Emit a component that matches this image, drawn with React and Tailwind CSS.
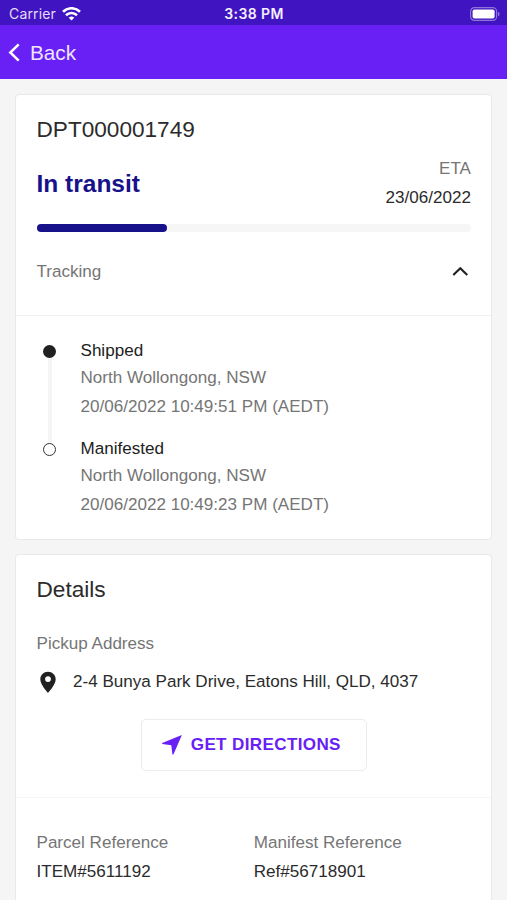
const events = [
  { title: "Shipped", place: "North Wollongong, NSW", time: "20/06/2022 10:49:51 PM (AEDT)", current: true },
  { title: "Manifested", place: "North Wollongong, NSW", time: "20/06/2022 10:49:23 PM (AEDT)", current: false },
];

function StatusBar() {
  return (
    <div className="grid h-[25px] grid-cols-3 items-center bg-[#4114c1] pt-[2px] pr-[7px] pl-[9px] font-['Inter',sans-serif] text-white">
      <div className="flex items-center gap-[6px]">
        <span className="text-[14px] leading-[20px] tracking-[0.15px] text-[#e6dcfb]">Carrier</span>
        <svg width="19" height="14" viewBox="0 0 19 14" fill="none" stroke="#fff" strokeWidth="2.6">
          <path d="M1 4.700a12.200 12.200 0 0 1 17 0" />
          <path d="M4 8.200a7.900 7.900 0 0 1 11 0" />
          <path d="M9.500 13.600 6.700 10.800a4 4 0 0 1 5.600 0Z" fill="#fff" stroke="none" />
        </svg>
      </div>
      <span className="pr-[1px] text-center text-[14px] leading-[20px] font-semibold tracking-[0.4px] text-[#f4effe]">3:38 PM</span>
      <svg className="justify-self-end" width="30" height="14" viewBox="0 0 30 14">
        <rect x="0.600" y="0.600" width="26" height="12.800" rx="3.800" fill="none" stroke="#8d74da" strokeWidth="1.200" />
        <rect x="2.600" y="2.400" width="22" height="9.200" rx="1.800" fill="#fff" />
        <path d="M28 4.700c2.100.700 2.100 3.900 0 4.600Z" fill="#8d74da" />
      </svg>
    </div>
  );
}

function Event({ event, last }) {
  return (
    <div className={last ? "flex h-[86px]" : "flex h-[98px]"}>
      <div className="flex w-[44px] shrink-0 flex-col items-start pt-[6px] pl-[6.5px]">
        <div
          className={
            event.current
              ? "size-[13px] shrink-0 rounded-full bg-[#212121]"
              : "size-[13px] shrink-0 rounded-full border-[1.5px] border-[#333] bg-white"
          }
        />
        {!last && <div className="-mb-[6px] ml-[4.5px] w-[4px] grow bg-[#f5f5f5]" />}
      </div>
      <div>
        <p className="h-[25px] leading-[24px] text-[#212121]">{event.title}</p>
        <p className="h-[29px] leading-[28px] text-[#757575]">{event.place}</p>
        <p className="leading-[28px] text-[#757575]">{event.time}</p>
      </div>
    </div>
  );
}

export default function App() {
  return (
    <div className="h-[900px] w-[507px] overflow-hidden bg-[#f5f5f5] font-['Liberation_Sans',Arial,sans-serif] text-[17.07px] text-[#2b2b2b]">
      <StatusBar />
      <header className="flex h-[54px] items-center bg-[#6820f5] pt-[2px] pl-[8px] text-white">
        <svg width="14" height="20" viewBox="0 0 14 20" fill="none" stroke="#fff" strokeWidth="2.500">
          <path d="M10.700 1.400 2.300 9.500l8.400 8.100" />
        </svg>
        <span className="pl-[8px] text-[20.7px] leading-[30px] text-[#efe5ff]">Back</span>
      </header>

      <main className="flex flex-col gap-[14px] pt-[15px] pr-[15px] pl-[15px]">
        <section className="h-[446px] rounded-[4px] border border-[#e9e9e9] bg-white">
          <div className="h-[221px] border-b border-[#f1f1f1] pr-[20px] pl-[20.5px] pt-[20px]">
            <h1 className="text-[22.6px] leading-[29px]">DPT000001749</h1>
            <div className="flex h-[80px] justify-between pt-[10px]">
              <p className="pt-[14px] text-[24.5px] leading-[32px] font-bold text-[#17118a]">In transit</p>
              <div className="text-right">
                <p className="leading-[30px] text-[#757575]">ETA</p>
                <p className="leading-[28px]">23/06/2022</p>
              </div>
            </div>
            <div className="h-[8px] rounded-full bg-[#f6f6f6]">
              <div className="h-full w-[130.5px] rounded-full bg-[#17118a]" />
            </div>
            <div className="flex items-center justify-between pt-[24px] pr-[3px]">
              <span className="leading-[31px] text-[#757575]">Tracking</span>
              <svg width="16" height="10" viewBox="0 0 16 10" fill="none" stroke="#212121" strokeWidth="2.200">
                <path d="M1.300 8 8.300 1.300l7 6.700" />
              </svg>
            </div>
          </div>
          <div className="pt-[23px] pl-[20.5px]">
            {events.map((e, i) => (
              <Event key={e.title} event={e} last={i === events.length - 1} />
            ))}
          </div>
        </section>

        <section className="h-[400px] rounded-t-[4px] border border-[#e9e9e9] bg-white">
          <div className="h-[243px] border-b border-[#f5f5f5] pr-[20px] pl-[20.5px] pt-[20px]">
            <h2 className="text-[22.6px] leading-[30px]">Details</h2>
            <p className="pt-[24px] leading-[30px] text-[#757575]">Pickup Address</p>
            <div className="flex items-center pt-[8px]">
              <svg className="ml-[3.500px]" width="16" height="22" viewBox="0 0 16 22">
                <path
                  fillRule="evenodd"
                  fill="#212121"
                  d="M8 .700C3.700.700.300 4 .300 8.200c0 5.500 7.700 13.700 7.700 13.700S15.700 13.700 15.700 8.200C15.700 4 12.300.700 8 .700Zm0 10.300a2.900 2.900 0 1 1 0-5.800 2.900 2.900 0 0 1 0 5.800Z"
                />
              </svg>
              <span className="pl-[17px] leading-[30px]">2-4 Bunya Park Drive, Eatons Hill, QLD, 4037</span>
            </div>
            <div className="flex justify-center pt-[22px]">
              <button className="flex h-[52px] w-[226px] items-center rounded-[5px] border-[1.5px] border-[#ececec] bg-white pl-[20px] text-[#6820f5]">
                <svg width="20" height="20" viewBox="0 0 20 20" fill="#6820f5">
                  <path d="M19.900.100.200 8v1l9.100 1.300 1.100 9.100h1Z" />
                </svg>
                <span className="pl-[9px] leading-[24px] font-bold tracking-[0.36px]">GET DIRECTIONS</span>
              </button>
            </div>
          </div>
          <div className="grid grid-cols-2 pr-[20px] pl-[20.5px] pt-[30px]">
            <div>
              <p className="leading-[30px] text-[#757575]">Parcel Reference</p>
              <p className="leading-[28px]">ITEM#5611192</p>
            </div>
            <div>
              <p className="leading-[30px] text-[#757575]">Manifest Reference</p>
              <p className="leading-[28px]">Ref#56718901</p>
            </div>
          </div>
        </section>
      </main>
    </div>
  );
}
